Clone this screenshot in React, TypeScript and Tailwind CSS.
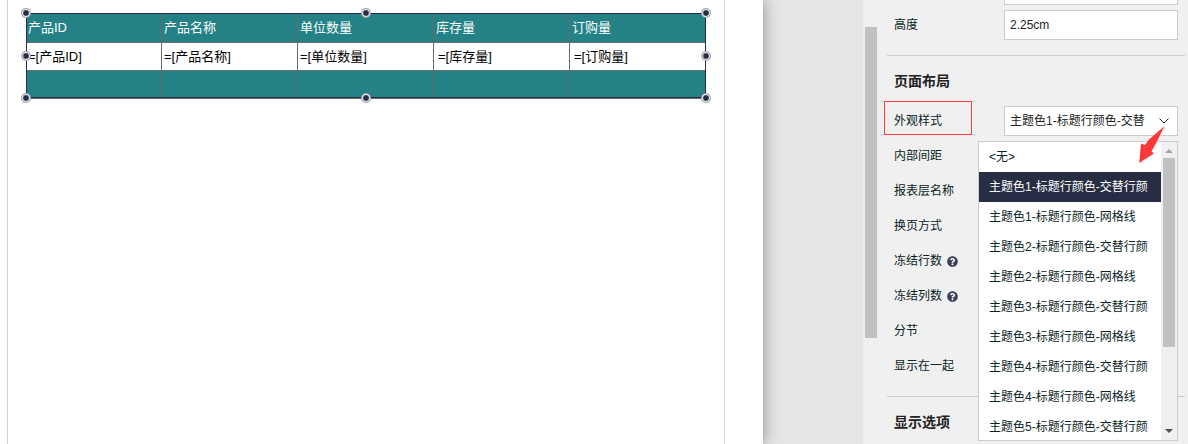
import { useState } from 'react';
import { FaQuestionCircle } from 'react-icons/fa';
import clsx from 'clsx';

const COLUMNS = [
  { name: '产品ID' },
  { name: '产品名称' },
  { name: '单位数量' },
  { name: '库存量', numeric: true },
  { name: '订购量', numeric: true },
];

const STYLES = [
  '<无>',
  '主题色1-标题行颜色-交替行颜',
  '主题色1-标题行颜色-网格线',
  '主题色2-标题行颜色-交替行颜',
  '主题色2-标题行颜色-网格线',
  '主题色3-标题行颜色-交替行颜',
  '主题色3-标题行颜色-网格线',
  '主题色4-标题行颜色-交替行颜',
  '主题色4-标题行颜色-网格线',
  '主题色5-标题行颜色-交替行颜',
];

const ROWS = [
  { label: '内部间距' },
  { label: '报表层名称' },
  { label: '换页方式' },
  { label: '冻结行数', help: true },
  { label: '冻结列数', help: true },
  { label: '分节' },
  { label: '显示在一起' },
];

const HANDLES = [
  'left-0 top-0',
  'left-1/2 top-0',
  'left-full top-0',
  'left-0 top-1/2',
  'left-full top-1/2',
  'left-0 top-full',
  'left-1/2 top-full',
  'left-full top-full',
];

function ReportTable() {
  return (
    <div className="relative mt-[13px] ml-[18px] w-[680px]">
      <table className="w-full table-fixed border-separate border-spacing-0 text-left text-[13px] leading-5">
        <thead>
          <tr className="h-[30px] bg-[#248287] text-white">
            {COLUMNS.map(({ name }) => (
              <th key={name} className="border-r border-b border-[#696969] p-0 pl-[2px] font-normal">
                {name}
              </th>
            ))}
          </tr>
        </thead>
        <tbody>
          <tr className="h-7 bg-white text-black">
            {COLUMNS.map(({ name, numeric }) => (
              <td
                key={name}
                className={clsx('border-r border-b border-[#696969] p-0', numeric ? 'pl-1' : 'pl-[2px]')}
              >
                =[{name}]
              </td>
            ))}
          </tr>
          <tr className="h-7 bg-[#248287]">
            {COLUMNS.map(({ name }) => (
              <td key={name} className="border-r border-b border-[#696969] p-0" />
            ))}
          </tr>
        </tbody>
      </table>
      <div className="pointer-events-none absolute inset-0 bottom-px border border-[#272d42]" />
      <div className="absolute inset-0 bottom-px">
        {HANDLES.map((pos) => (
          <span
            key={pos}
            className={clsx(
              'absolute size-2 -translate-x-1/2 -translate-y-1/2 rounded-full border border-white bg-[#272d42] ring-1 ring-[#a3a6b0]',
              pos,
            )}
          />
        ))}
      </div>
    </div>
  );
}

interface StyleListProps {
  value: string;
  onSelect: (value: string) => void;
}

function StyleList({ value, onSelect }: StyleListProps) {
  return (
    <div className="absolute top-[35px] right-0 z-10 flex h-[300px] w-[200px] overflow-hidden border border-[#cccccc] bg-white">
      <div role="listbox" aria-label="外观样式" className="flex-1">
        {STYLES.map((name) => (
          <button
            key={name}
            type="button"
            role="option"
            aria-selected={name === value}
            onClick={() => onSelect(name)}
            className={clsx(
              'block h-[30px] w-full px-[10px] text-left whitespace-nowrap',
              name === value ? 'bg-[#272d42] text-white' : 'text-[#0a2424]',
            )}
          >
            {name}
          </button>
        ))}
      </div>
      <div className="flex w-4 flex-col items-center bg-[#f0f0f0]">
        <svg viewBox="0 0 16 16" className="size-4 shrink-0 fill-[#a3a3a3]">
          <path d="M4 11 L8 7 L12 11 Z" />
        </svg>
        <div className="h-[189px] w-3 bg-[#c1c1c1]" />
        <svg viewBox="0 0 16 16" className="mt-auto size-4 shrink-0 fill-[#505050]">
          <path d="M4 5 L12 5 L8 9 Z" />
        </svg>
      </div>
    </div>
  );
}

function PropertyPanel() {
  const [height, setHeight] = useState('2.25cm');
  const [width, setWidth] = useState('');
  const [style, setStyle] = useState(STYLES[1]);

  return (
    <aside className="flex w-[325px] shrink-0 overflow-hidden bg-[#f0f0f0] pl-[2px] text-xs text-[#0a2424]">
      <div className="mt-[27px] h-[311px] w-3 shrink-0 bg-[#c1c1c1]" />
      <div className="-mt-[25px] ml-[10px] mr-[3px] flex-1">
        <div className="mb-[15px] flex flex-col gap-[5px] pr-[7px] pl-[7px]">
          <div className="flex h-[30px] justify-end">
            <input
              aria-label="宽度"
              value={width}
              onChange={(e) => setWidth(e.target.value)}
              className="w-[174px] border border-[#cccccc] bg-white px-[5px]"
            />
          </div>
          <div className="flex h-[30px] items-center justify-between">
            <label htmlFor="height">高度</label>
            <input
              id="height"
              value={height}
              onChange={(e) => setHeight(e.target.value)}
              className="h-full w-[174px] border border-[#cccccc] bg-white px-[5px] text-[#222222]"
            />
          </div>
        </div>

        <section className="border-t border-[#cccccc] pr-[7px] pl-[7px]">
          <h2 className="flex h-[50px] items-center text-sm font-bold text-[#222222]">页面布局</h2>
          <div className="flex flex-col gap-[5px]">
            <div className="relative flex h-[30px] items-center justify-between">
              <label htmlFor="style">外观样式</label>
              <div className="pointer-events-none absolute -top-[5px] -left-[10px] h-[34px] w-[88px] border border-[#f93a3a]" />
              <div className="relative h-full w-[174px]">
                <select
                  id="style"
                  value={style}
                  onChange={(e) => setStyle(e.target.value)}
                  className="h-full w-full appearance-none border border-[#cccccc] bg-white pr-8 pl-[5px] text-[#222222]"
                >
                  {STYLES.map((name) => (
                    <option key={name}>{name}</option>
                  ))}
                </select>
                <svg
                  viewBox="0 0 10 6"
                  className="pointer-events-none absolute top-3 right-[9px] h-[6px] w-[10px] fill-none stroke-[#222222]"
                >
                  <path d="M0.5 0.5 L5 5 L9.5 0.5" />
                </svg>
                <StyleList value={style} onSelect={setStyle} />
                <svg
                  viewBox="0 0 28 40"
                  className="pointer-events-none absolute top-[19px] right-[12px] z-20 h-10 w-7 fill-[#fd3838]"
                >
                  <path d="M26.5 1 L18.7 17 L13.5 26.5 L16 28.5 L1.2 38 L3 18.5 L7 20 L10.5 15 Z" />
                </svg>
              </div>
            </div>
            {ROWS.map((row) => (
              <div key={row.label} className="flex h-[30px] items-center gap-[5px]">
                <span>{row.label}</span>
                {row.help && <FaQuestionCircle className="size-[11px] text-[#3a4055]" />}
              </div>
            ))}
          </div>
        </section>

        <section className="mt-[15px] border-t border-[#cccccc] pl-[7px]">
          <h2 className="flex h-[50px] items-center text-sm font-bold text-[#222222]">显示选项</h2>
        </section>
      </div>
    </aside>
  );
}

export default function App() {
  return (
    <div className="flex h-screen overflow-hidden bg-[#e5e5e5] font-['Liberation_Sans','Noto_Sans_CJK_SC',sans-serif]">
      <main className="flex flex-1 pr-[100px]">
        <div className="flex flex-1 bg-white pr-[38px] pl-[7px] shadow-[0_0_15px_rgba(0,0,0,0.4)]">
          <div className="flex-1 border-x border-[#d0d0d0]">
            <ReportTable />
          </div>
        </div>
      </main>
      <PropertyPanel />
    </div>
  );
}
